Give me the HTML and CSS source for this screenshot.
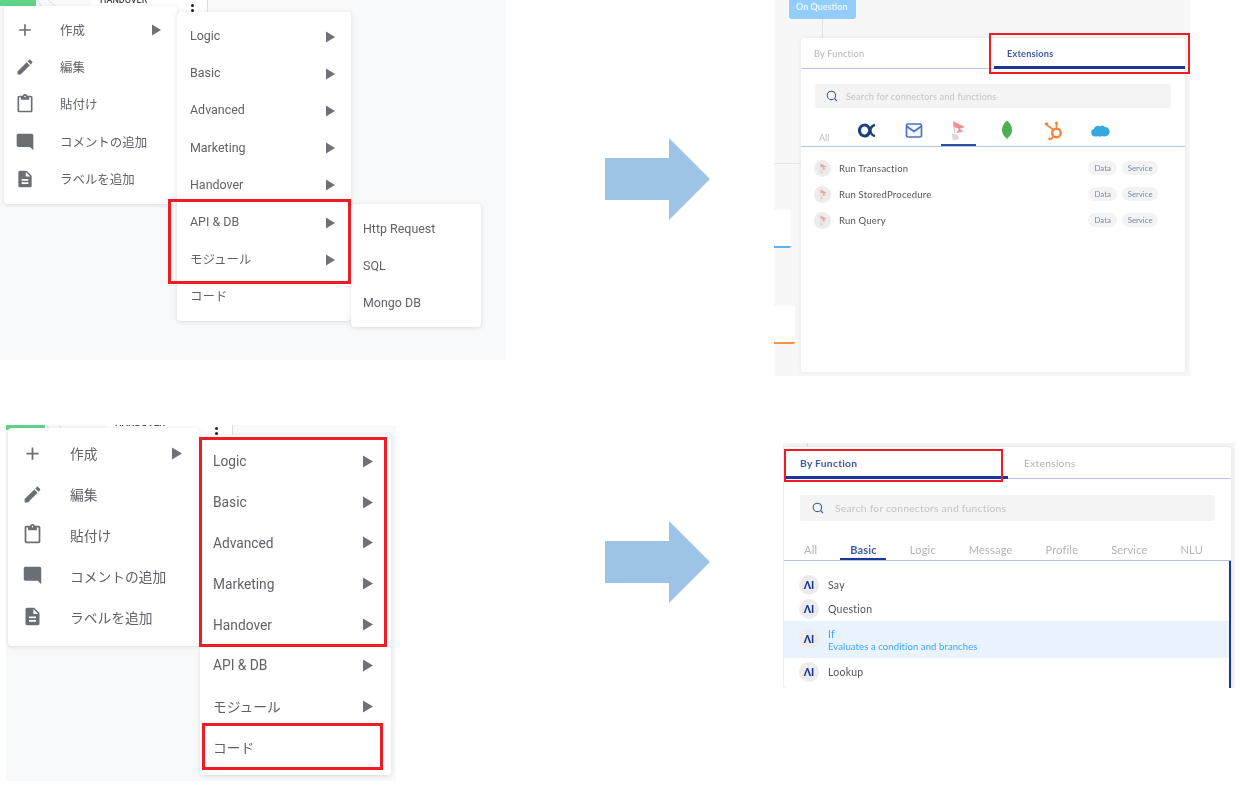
FILE: index.html
```html
<!DOCTYPE html>
<html lang="ja">
<head>
<meta charset="utf-8">
<title>Menu mapping</title>
<link rel="stylesheet" href="styles.css">
</head>
<body>
<svg class="defs" width="0" height="0" aria-hidden="true">
  <symbol id="i-add" viewBox="0 0 24 24"><path d="M19 13h-6v6h-2v-6H5v-2h6V5h2v6h6v2z"/></symbol>
  <symbol id="i-edit" viewBox="0 0 24 24"><path d="M3 17.25V21h3.75L17.81 9.94l-3.75-3.75L3 17.25zM20.71 7.04c.39-.39.39-1.02 0-1.41l-2.34-2.34c-.39-.39-1.02-.39-1.41 0l-1.83 1.83 3.75 3.75 1.83-1.83z"/></symbol>
  <symbol id="i-paste" viewBox="0 0 24 24"><path d="M19 2h-4.18C14.4.84 13.3 0 12 0c-1.3 0-2.4.84-2.82 2H5c-1.1 0-2 .9-2 2v16c0 1.1.9 2 2 2h14c1.1 0 2-.9 2-2V4c0-1.1-.9-2-2-2zm-7 0c.55 0 1 .45 1 1s-.45 1-1 1-1-.45-1-1 .45-1 1-1zm7 18H5V4h2v3h10V4h2v16z"/></symbol>
  <symbol id="i-comment" viewBox="0 0 24 24"><path d="M21.99 4c0-1.1-.89-2-1.99-2H4c-1.1 0-2 .9-2 2v12c0 1.1.9 2 2 2h14l4 4-.01-18z"/></symbol>
  <symbol id="i-doc" viewBox="0 0 24 24"><path d="M14 2H6c-1.1 0-1.99.9-1.99 2L4 20c0 1.1.89 2 1.99 2H18c1.1 0 2-.9 2-2V8l-6-6zm2 16H8v-2h8v2zm0-4H8v-2h8v2zm-3-5V3.5L18.5 9H13z"/></symbol>
  <symbol id="i-tri" viewBox="0 0 10 12"><path d="M0 0l10 6-10 6z"/></symbol>
  <symbol id="i-search" viewBox="0 0 12 12"><circle cx="5.4" cy="5.4" r="4.2" fill="none" stroke="#3b5bb0" stroke-width="1.1"/><path d="M8.4 8.4l2.6 2.6" stroke="#3b5bb0" stroke-width="1.2" fill="none"/></symbol>
  <symbol id="i-sql" viewBox="0 0 20 24"><path d="M4 1l14 7-6 2 4 3-8 2 3-5-6-2z" fill="#ee7b7f" opacity=".85"/><path d="M3 15l7 2 1 5-7 1z" fill="#d8d8d8"/><path d="M5 2l1 13" stroke="#eeb0b0" stroke-width="1" fill="none"/></symbol>
</svg>

<section class="panel panel-a menu-s">
  <div class="strip">
    <div class="strip-green"></div>
    <svg class="strip-lines" width="40" height="12" viewBox="0 0 40 12"><path d="M2 0l6 12M12 0l12 10" stroke="#ddd" fill="none"/></svg>
    <div class="strip-node"><span class="strip-title">HANDOVER</span><span class="strip-dots"></span></div>
  </div>
  <div class="menu m1">
    <div class="row"><svg class="ic"><use href="#i-add"/></svg><span class="lbl">作成</span><svg class="tri"><use href="#i-tri"/></svg></div>
    <div class="row"><svg class="ic"><use href="#i-edit"/></svg><span class="lbl">編集</span></div>
    <div class="row"><svg class="ic"><use href="#i-paste"/></svg><span class="lbl">貼付け</span></div>
    <div class="row"><svg class="ic"><use href="#i-comment"/></svg><span class="lbl">コメントの追加</span></div>
    <div class="row"><svg class="ic"><use href="#i-doc"/></svg><span class="lbl">ラベルを追加</span></div>
  </div>
  <div class="menu m2">
    <div class="row"><span class="lbl">Logic</span><svg class="tri"><use href="#i-tri"/></svg></div>
    <div class="row"><span class="lbl">Basic</span><svg class="tri"><use href="#i-tri"/></svg></div>
    <div class="row"><span class="lbl">Advanced</span><svg class="tri"><use href="#i-tri"/></svg></div>
    <div class="row"><span class="lbl">Marketing</span><svg class="tri"><use href="#i-tri"/></svg></div>
    <div class="row"><span class="lbl">Handover</span><svg class="tri"><use href="#i-tri"/></svg></div>
    <div class="row"><span class="lbl">API &amp; DB</span><svg class="tri"><use href="#i-tri"/></svg></div>
    <div class="row"><span class="lbl">モジュール</span><svg class="tri"><use href="#i-tri"/></svg></div>
    <div class="row"><span class="lbl">コード</span></div>
  </div>
  <div class="menu m3">
    <div class="row"><span class="lbl">Http Request</span></div>
    <div class="row"><span class="lbl">SQL</span></div>
    <div class="row"><span class="lbl">Mongo DB</span></div>
  </div>
</section>

<section class="panel panel-c menu-l">
  <div class="strip">
    <div class="strip-green"></div>
    <svg class="strip-lines" width="44" height="4" viewBox="0 0 44 4"><path d="M2 0l2 4M14 0l3 4" stroke="#ddd" fill="none"/></svg>
    <div class="strip-node"><span class="strip-title">HANDOVER</span><span class="strip-dots"></span></div>
  </div>
  <div class="menu m1">
    <div class="row"><svg class="ic"><use href="#i-add"/></svg><span class="lbl">作成</span><svg class="tri"><use href="#i-tri"/></svg></div>
    <div class="row"><svg class="ic"><use href="#i-edit"/></svg><span class="lbl">編集</span></div>
    <div class="row"><svg class="ic"><use href="#i-paste"/></svg><span class="lbl">貼付け</span></div>
    <div class="row"><svg class="ic"><use href="#i-comment"/></svg><span class="lbl">コメントの追加</span></div>
    <div class="row"><svg class="ic"><use href="#i-doc"/></svg><span class="lbl">ラベルを追加</span></div>
  </div>
  <div class="menu m2">
    <div class="row"><span class="lbl">Logic</span><svg class="tri"><use href="#i-tri"/></svg></div>
    <div class="row"><span class="lbl">Basic</span><svg class="tri"><use href="#i-tri"/></svg></div>
    <div class="row"><span class="lbl">Advanced</span><svg class="tri"><use href="#i-tri"/></svg></div>
    <div class="row"><span class="lbl">Marketing</span><svg class="tri"><use href="#i-tri"/></svg></div>
    <div class="row"><span class="lbl">Handover</span><svg class="tri"><use href="#i-tri"/></svg></div>
    <div class="row"><span class="lbl">API &amp; DB</span><svg class="tri"><use href="#i-tri"/></svg></div>
    <div class="row"><span class="lbl">モジュール</span><svg class="tri"><use href="#i-tri"/></svg></div>
    <div class="row"><span class="lbl">コード</span></div>
  </div>
</section>

<section class="panel panel-b">
  <div class="chip-q">On Question</div>
  <div class="wire"></div>
  <div class="hline"></div>
  <div class="node node-blue"></div>
  <div class="node node-orange"></div>
  <div class="card card-b">
    <div class="tabs">
      <div class="tab">By Function</div>
      <div class="tab active">Extensions</div>
    </div>
    <div class="search"><svg class="search-ic"><use href="#i-search"/></svg><span>Search for connectors and functions</span></div>
    <div class="logos">
      <span class="logo-all">All</span>
      <div class="logo-cell"><svg class="logo" viewBox="0 0 20 16"><path d="M8 2.500a5.500 5.500 0 1 0 0 11c2.500 0 4-2 5-5.500-1-3.500-2.500-5.500-5-5.500z" fill="none" stroke="#1d3f7c" stroke-width="3.200"/><path d="M13 8c.8-3 2-5 5-5.500M13 8c.8 3 2 5 5 5.500" fill="none" stroke="#1d3f7c" stroke-width="2.400"/></svg></div>
      <div class="logo-cell"><svg class="logo" viewBox="0 0 20 16"><rect x="2.500" y="1.500" width="15" height="13" rx="1.500" fill="#f2f6fd" stroke="#4a72c0" stroke-width="1.700"/><path d="M3 4l7 5 7-5" fill="none" stroke="#4a72c0" stroke-width="1.700"/></svg></div>
      <div class="logo-cell current"><svg class="logo logo-tall"><use href="#i-sql"/></svg></div>
      <div class="logo-cell"><svg class="logo logo-tall" viewBox="0 0 20 20"><path d="M10 0c3.500 3 5 6 5 9.500 0 4-2.800 7-4.400 8L10 20l-.6-2.500C7.800 16.500 5 13.500 5 9.500 5 6 6.500 3 10 0z" fill="#4caf50"/></svg></div>
      <div class="logo-cell"><svg class="logo logo-tall" viewBox="0 0 20 20"><circle cx="12.500" cy="12.500" r="4.300" fill="none" stroke="#f0883e" stroke-width="2.400"/><path d="M12.500 8V3M9.500 9.500L3 4.500M9.500 16l-3 3" stroke="#f0883e" stroke-width="1.800" fill="none"/><circle cx="12.500" cy="2.500" r="1.600" fill="#f0883e"/><circle cx="2.500" cy="3.500" r="1.800" fill="#f0883e"/><circle cx="5.500" cy="18.500" r="1.300" fill="#f0883e"/></svg></div>
      <div class="logo-cell"><svg class="logo" viewBox="0 0 20 14"><path d="M5 13a4 4 0 0 1-1-7.800A4 4 0 0 1 10 3a3.500 3.500 0 0 1 5 .5A4.500 4.500 0 0 1 15 13c-1 0-2 0-2.500-.5-1.500 1-3 1-4 .3C7 13 6 13 5 13z" fill="#36a9e1"/></svg></div>
    </div>
    <ul class="ext-list">
      <li class="ext"><span class="avatar"><svg class="av-sql"><use href="#i-sql"/></svg></span><span class="ext-name">Run Transaction</span><span class="pill">Data</span><span class="pill">Service</span></li>
      <li class="ext"><span class="avatar"><svg class="av-sql"><use href="#i-sql"/></svg></span><span class="ext-name">Run StoredProcedure</span><span class="pill">Data</span><span class="pill">Service</span></li>
      <li class="ext"><span class="avatar"><svg class="av-sql"><use href="#i-sql"/></svg></span><span class="ext-name">Run Query</span><span class="pill">Data</span><span class="pill">Service</span></li>
    </ul>
  </div>
</section>

<section class="panel panel-d">
  <div class="backline"></div>
  <div class="card card-d">
    <div class="tabs">
      <div class="tab active">By Function</div>
      <div class="tab">Extensions</div>
    </div>
    <div class="search"><svg class="search-ic"><use href="#i-search"/></svg><span>Search for connectors and functions</span></div>
    <div class="subtabs">
      <span class="sub">All</span>
      <span class="sub current">Basic</span>
      <span class="sub">Logic</span>
      <span class="sub">Message</span>
      <span class="sub">Profile</span>
      <span class="sub">Service</span>
      <span class="sub">NLU</span>
    </div>
    <ul class="fn-list">
      <li class="fn"><span class="avatar ai">ΛI</span><span class="fn-name">Say</span></li>
      <li class="fn"><span class="avatar ai">ΛI</span><span class="fn-name">Question</span></li>
      <li class="fn selected"><span class="avatar ai">ΛI</span><span class="fn-text"><span class="fn-name">If</span><span class="fn-desc">Evaluates a condition and branches</span></span></li>
      <li class="fn"><span class="avatar ai">ΛI</span><span class="fn-name">Lookup</span></li>
      <li class="fn"><span class="avatar ai"></span></li>
    </ul>
  </div>
</section>

<svg class="arrow arrow-top" viewBox="0 0 105 82"><path d="M0 20h64V0l41 41-41 41V62H0z"/></svg>
<svg class="arrow arrow-bottom" viewBox="0 0 105 82"><path d="M0 20h64V0l41 41-41 41V62H0z"/></svg>

<div class="mark mark-1"></div>
<div class="mark mark-2"></div>
<div class="mark mark-3"></div>
<div class="mark mark-4"></div>
<div class="mark mark-5"></div>
</body>
</html>
```
FILE: styles.css
```css
* { box-sizing: border-box; }
html, body { margin: 0; padding: 0; }
body {
  position: relative;
  width: 1240px;
  height: 790px;
  overflow: hidden;
  background: #fff;
  font-family: Roboto, "Noto Sans CJK JP", sans-serif;
}
.defs { position: absolute; }
ul { list-style: none; margin: 0; padding: 0; }

/* Collage pieces: each is a pasted screenshot on a free canvas */
.panel { position: absolute; overflow: hidden; }
.panel-a { left: 0; top: 0; width: 506px; height: 360px; background: #f8f9fb; filter: blur(.3px); }
.panel-c { left: 6px; top: 425px; width: 390px; height: 356px; background: #f8f9fb; filter: blur(.3px); }
.panel-b { left: 774px; top: 0; width: 416px; height: 376px; background: #f7f7f7 radial-gradient(#ececec .5px, transparent .6px) 0 0 / 4px 4px; filter: blur(.45px); }
.panel-d { left: 783px; top: 443px; width: 452px; height: 245px; background: #f5f5f5; filter: blur(.35px); }

/* Node strip peeking out behind the menus */
.strip { position: absolute; left: 0; top: 0; display: flex; background: #f8f9fb; }
.strip-green { background: #62d488; }
.strip-lines { display: block; }
.strip-node { position: relative; background: #fff; border-right: 1px solid #ddd; }
.strip-title { position: absolute; top: -5px; font-weight: 500; color: #444; white-space: nowrap; }
.strip-dots { position: absolute; width: 3px; height: 3px; border-radius: 50%; background: #222; box-shadow: 0 5px 0 #222; }

.panel-a .strip { width: 208px; height: 12px; }
.panel-a .strip-green { width: 36px; height: 6px; }
.panel-a .strip-lines { margin: 0 15px 0 0; }
.panel-a .strip-node { width: 117px; height: 12px; }
.panel-a .strip-title { left: 9px; font-size: 9px; }
.panel-a .strip-dots { left: 100px; top: 4px; }

.panel-c .strip { width: 227px; height: 10px; }
.panel-c .strip-green { width: 39px; height: 5px; }
.panel-c .strip-lines { margin-right: 17px; }
.panel-c .strip-node { width: 127px; height: 10px; }
.panel-c .strip-title { left: 9px; font-size: 9.500px; top: -8px; }
.panel-c .strip-dots { left: 109px; top: 2px; }

/* Context menus */
.menu { position: absolute; background: #fff; border-radius: 4px; box-shadow: 0 1px 4px rgba(60, 64, 67, .16); color: #5f6368; }
.row { display: flex; align-items: center; }
.ic { fill: #6b6f73; flex: none; }
.tri { fill: #6e7175; flex: none; margin-left: auto; }
.lbl { white-space: nowrap; }

.menu-s .menu { padding: 6px 0; font-size: 12.450px; }
.menu-s .m2 .lbl { padding-bottom: 2px; }
.menu-s .row { height: 37.200px; }
.menu-s .ic { width: 20px; height: 20px; margin: 0 25px 0 11px; }
.menu-s .tri { width: 9px; height: 12px; }
.menu-s .m1 { left: 4px; top: 6px; width: 173px; height: 198px; padding-top: 5.500px; }
.menu-s .m1 .tri { margin-right: 16px; }
.menu-s .m2 { left: 177px; top: 12px; width: 174px; height: 309px; }
.menu-s .m2 .row { padding: 0 16px 0 13px; }
.menu-s .m3 { left: 351px; top: 204px; width: 130px; height: 123px; }
.menu-s .m3 .row { padding-left: 12px; }

.menu-l .menu { padding: 6px 0; font-size: 13.750px; }
.menu-l .row { height: 40.800px; }
.menu-l .ic { width: 21px; height: 21px; margin: 0 27px 0 14px; }
.menu-l .tri { width: 10px; height: 13px; }
.menu-l .m1 { left: 2px; top: 3px; width: 191px; height: 218px; padding-top: 5px; }
.menu-l .m1 .tri { margin-right: 17px; }
.menu-l .m2 { left: 194px; top: 10px; width: 191px; height: 340px; }
.menu-l .m2 .row { padding: 0 18px 0 13px; }

/* Flow-builder backdrop of the top-right panel */
.chip-q { position: absolute; left: 15px; top: -3px; width: 67px; height: 22px; padding: 4px 0 0 7px; border-radius: 3px; background: #93cefb; color: #e8f5ff; font: 700 9px Lato, sans-serif; }
.wire { position: absolute; left: 48px; top: 19px; width: 1px; height: 20px; background: #e2e2e2; }
.hline { position: absolute; left: 0; top: 163px; width: 28px; height: 1px; background: #e6e6e6; }
.node { position: absolute; left: 0; background: #fff; border-radius: 0 2px 2px 0; }
.node-blue { top: 210px; width: 17px; height: 38px; border-bottom: 2px solid #5cb1f6; }
.node-orange { top: 306px; width: 21px; height: 38px; border-bottom: 2px solid #f5934a; }

/* Picker cards */
.card { position: absolute; background: #fff; border-radius: 3px; font-family: Lato, sans-serif; box-shadow: 0 0 4px rgba(0, 0, 0, .08); }
.tabs { display: flex; border-bottom: 1px solid #b4c4e8; }
.tab { position: relative; color: #b4b4b4; white-space: nowrap; }
.tab.active { color: #3f5aa8; border-bottom: 3px solid #17379a; }
.search { display: flex; align-items: center; background: #f4f4f4; border-radius: 3px; color: #c4c4c4; white-space: nowrap; }
.search-ic { flex: none; }
.avatar { display: flex; flex: none; align-items: center; justify-content: center; border-radius: 50%; background: #ececec; }

.card-b { left: 27px; top: 38px; width: 384px; height: 334px; }
.card-b .tabs { height: 31px; margin-bottom: 15px; font-size: 9.200px; letter-spacing: .2px; }
.card-b .tab { width: 193px; padding: 10px 0 0 13px; margin-bottom: -1px; }
.card-b .tab.active { width: 191px; font-weight: 700; }
.card-b .search { height: 24px; margin: 0 14px; padding-left: 11px; font-size: 9.200px; letter-spacing: .15px; }
.card-b .search-ic { width: 12px; height: 12px; margin-right: 8px; }

.logos { display: grid; grid-template-columns: 42.600px repeat(6, 46.700px); height: 39px; border-bottom: 1px solid #b4c4e8; }
.logo-all { align-self: end; padding: 0 0 3px 18px; font-size: 9px; color: #bdbdbd; }
.logo-cell { display: flex; justify-content: center; padding-top: 14px; }
.logo-cell.current { margin: 0 8px 0 4px; padding-top: 12px; border-bottom: 2px solid #2c4da6; }
.logo { display: block; width: 20px; height: 17px; flex: none; }
.logo-tall { height: 21px; margin-top: -2px; }
.current .logo-tall { margin-top: 0; }

.ext-list { padding-top: 8px; }
.ext { display: flex; align-items: center; height: 26px; padding: 0 27px 0 13px; }
.ext .avatar { width: 17px; height: 17px; margin-right: 8px; }
.av-sql { width: 10px; height: 11px; opacity: .8; }
.ext-name { flex: 1; font-size: 9.500px; color: #555; font-weight: 400; letter-spacing: .2px; }
.pill { display: flex; align-items: center; justify-content: center; min-width: 29px; height: 14px; padding: 0 5.500px; margin-left: 5px; border-radius: 7px; background: #f3f3f3; font-size: 7.800px; color: #7c8aa8; }

.backline { position: absolute; left: 24px; top: 0; width: 1px; height: 4px; background: #ddd; }
.card-d { left: 1px; top: 4px; width: 447px; height: 241px; }
.card-d .tabs { height: 32px; margin-bottom: 16px; font-size: 10.300px; letter-spacing: .25px; }
.card-d .tab { padding: 10px 0 0 16px; margin-bottom: -1px; width: 222px; }
.card-d .tab.active { width: 224px; font-weight: 700; }
.card-d .search { height: 26px; margin: 0 16px; padding-left: 12px; font-size: 10.400px; letter-spacing: .2px; }
.card-d .search-ic { width: 12px; height: 12px; margin-right: 11px; }

.subtabs { display: flex; justify-content: space-between; height: 40px; padding: 22px 28px 0 20px; border-bottom: 1px solid #b4c4e8; font-size: 11px; color: #b4b4b4; letter-spacing: .2px; }
.sub { position: relative; height: 17px; }
.sub.current { color: #3f5aa8; font-weight: 700; }
.sub.current::after { content: ""; position: absolute; left: -10px; right: -9px; bottom: 0; height: 2px; background: #17379a; }

.fn-list { position: relative; padding-top: 11.500px; border-right: 2px solid #17379a; height: 127px; overflow: hidden; }
.fn { display: flex; align-items: center; height: 24px; padding-left: 15px; }
.fn.selected + .fn { height: 28px; }
.fn .avatar { width: 20px; height: 20px; margin-right: 9px; }
.avatar.ai { font-size: 10.500px; font-weight: 900; color: #17379a; }
.fn-name { font-size: 10.500px; color: #555; letter-spacing: .25px; }
.fn.selected { height: 37px; background: #e8f3fd; }
.fn-text { display: flex; flex-direction: column; gap: 1px; padding-top: 1px; }
.selected .fn-name, .fn-desc { color: #3fa3fa; }
.fn-desc { font-size: 9.500px; letter-spacing: .1px; }

/* Arrows */
.arrow { position: absolute; left: 605px; width: 105px; height: 82px; fill: #9dc3e6; }
.arrow-top { top: 138px; }
.arrow-bottom { top: 521px; }

/* Red annotation boxes */
.mark { position: absolute; border: 3px solid #ee1c25; }
.mark-1 { left: 168px; top: 199px; width: 183px; height: 85px; }
.mark-2 { left: 989px; top: 33px; width: 201px; height: 41px; border-width: 2px; }
.mark-3 { left: 199px; top: 437px; width: 188px; height: 210px; }
.mark-4 { left: 202px; top: 723px; width: 181px; height: 47px; }
.mark-5 { left: 784px; top: 449px; width: 219px; height: 33px; border-width: 2px; }
```
